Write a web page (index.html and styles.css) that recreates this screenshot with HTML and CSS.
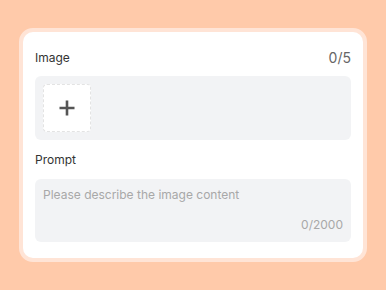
FILE: index.html
```html
<!DOCTYPE html>
<html>
<head>
<meta charset="utf-8">
<link rel="stylesheet" href="styles.css">
</head>
<body>
<div class="card">
  <div class="row">
    <span class="label">Image</span>
    <span class="count">0/5</span>
  </div>
  <div class="upload">
    <div class="add">
      <svg width="16" height="16" viewBox="0 0 16 16"><path d="M8 0.5v15M0.5 8h15" stroke="#555" stroke-width="2.6" fill="none"/></svg>
    </div>
  </div>
  <div class="row prompt-row">
    <span class="label">Prompt</span>
  </div>
  <div class="textarea">
    <div class="placeholder">Please describe the image content</div>
    <div class="tcount">0/2000</div>
  </div>
</div>
</body>
</html>
```
FILE: styles.css
```css
html, body { margin: 0; padding: 0; }
body {
  width: 386px;
  height: 290px;
  background: #ffcaaa;
  font-family: Inter, "Noto Sans", sans-serif;
  padding-top: 28px;
  box-sizing: border-box;
}
.card {
  margin-left: 19px;
  background: #fff;
  border: 4px solid #ffe4d6;
  border-radius: 14px;
  padding: 16px 12px;
  width: 316px;
}
.row {
  display: flex;
  justify-content: space-between;
  align-items: center;
  height: 18px;
  margin-bottom: 10px;
}
.label { font-size: 12px; color: #333; }
.count { font-size: 14px; color: #666; }
.prompt-row { margin-top: 10px; margin-bottom: 11px; }
.upload {
  background: #f2f3f5;
  border-radius: 6px;
  padding: 8px;
  height: 48px;
}
.add {
  width: 46px;
  height: 46px;
  border: 1px dashed #e3e3e3;
  border-radius: 4px;
  background: #fff;
  display: flex;
  align-items: center;
  justify-content: center;
}
.textarea {
  background: #f2f3f5;
  border-radius: 6px;
  height: 63px;
  box-sizing: border-box;
  padding: 7px 8px 8px 8px;
  display: flex;
  flex-direction: column;
  justify-content: space-between;
}
.placeholder { font-size: 12px; line-height: 18px; color: #a8a8a8; }
.tcount { font-size: 12px; line-height: 18px; color: #a8a8a8; text-align: right; }
```
